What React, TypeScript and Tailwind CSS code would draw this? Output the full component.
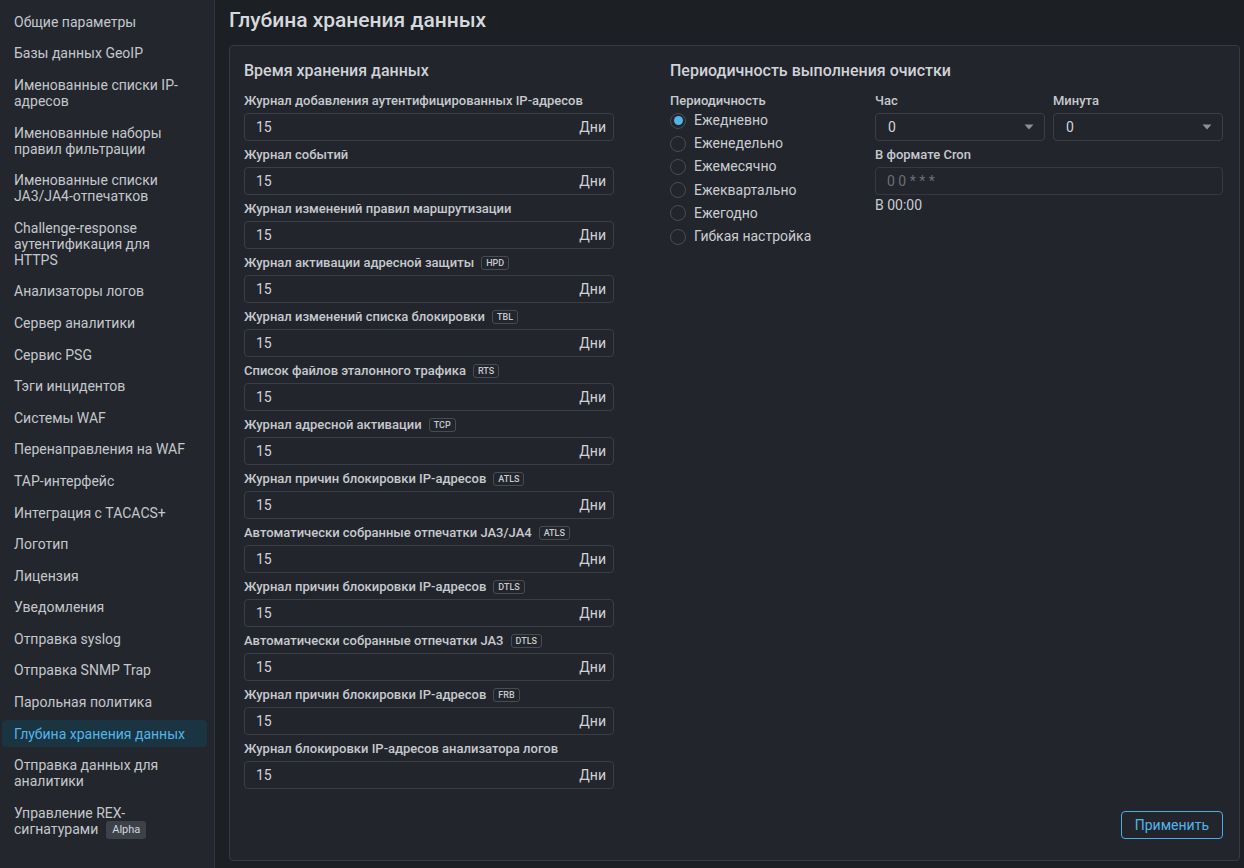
import React from "react";

const navItems: { label: string; active?: boolean; badge?: string; lines?: string[] }[] = [
  { label: "Общие параметры" },
  { label: "Базы данных GeoIP" },
  { label: "Именованные списки IP-адресов" },
  { label: "Именованные наборы правил фильтрации" },
  { label: "Именованные списки JA3/JA4-отпечатков" },
  { label: "Challenge-response аутентификация для HTTPS" },
  { label: "Анализаторы логов" },
  { label: "Сервер аналитики" },
  { label: "Сервис PSG" },
  { label: "Тэги инцидентов" },
  { label: "Системы WAF" },
  { label: "Перенаправления на WAF" },
  { label: "TAP-интерфейс" },
  { label: "Интеграция с TACACS+" },
  { label: "Логотип" },
  { label: "Лицензия" },
  { label: "Уведомления" },
  { label: "Отправка syslog" },
  { label: "Отправка SNMP Trap" },
  { label: "Парольная политика" },
  { label: "Глубина хранения данных", active: true },
  { label: "Отправка данных для аналитики" },
  { label: "Управление REX-сигнатурами", lines: ["Управление REX-", "сигнатурами"], badge: "Alpha" },
];

const retention: { label: string; tag?: string }[] = [
  { label: "Журнал добавления аутентифицированных IP-адресов" },
  { label: "Журнал событий" },
  { label: "Журнал изменений правил маршрутизации" },
  { label: "Журнал активации адресной защиты", tag: "HPD" },
  { label: "Журнал изменений списка блокировки", tag: "TBL" },
  { label: "Список файлов эталонного трафика", tag: "RTS" },
  { label: "Журнал адресной активации", tag: "TCP" },
  { label: "Журнал причин блокировки IP-адресов", tag: "ATLS" },
  { label: "Автоматически собранные отпечатки JA3/JA4", tag: "ATLS" },
  { label: "Журнал причин блокировки IP-адресов", tag: "DTLS" },
  { label: "Автоматически собранные отпечатки JA3", tag: "DTLS" },
  { label: "Журнал причин блокировки IP-адресов", tag: "FRB" },
  { label: "Журнал блокировки IP-адресов анализатора логов" },
];

const periods = [
  "Ежедневно",
  "Еженедельно",
  "Ежемесячно",
  "Ежеквартально",
  "Ежегодно",
  "Гибкая настройка",
];

function Caret() {
  return (
    <svg width="10" height="6" viewBox="0 0 10 6" className="shrink-0">
      <path d="M0.5 0.5 H9.5 L5 5.5 Z" fill="#8b9099" />
    </svg>
  );
}

function Select({ value }: { value: string }) {
  return (
    <div className="flex h-[28px] flex-1 items-center justify-between rounded-[4px] border border-[#3a3e46] pl-3 pr-[10px] text-[14px] text-[#d0d3d8]">
      <span>{value}</span>
      <Caret />
    </div>
  );
}

export default function App() {
  return (
    <div
      className="flex h-[868px] w-full overflow-hidden bg-[#1c1f24] text-[#c9ccd1]"
      style={{ fontFamily: "Roboto, 'Noto Sans', sans-serif" }}
    >
      {/* sidebar navigation */}
      <aside className="w-[215px] shrink-0 border-r border-[#30343b] bg-[#23262d] pt-[6px]">
        <nav className="flex flex-col pr-[7px] pl-[2px]">
          {navItems.map((item, i) => (
            <div
              key={i}
              className={
                item.active
                  ? "my-[2px] rounded-[4px] bg-[#1b3441] px-3 py-[5.8px] text-[14px] leading-[16px] text-[#52b4ea]"
                  : "my-[2px] rounded-[4px] px-3 py-[5.8px] text-[14px] leading-[16px] text-[#c4c7cc]"
              }
            >
              {item.lines ? (
                item.lines.map((line, j) => (
                  <div key={j} className="flex h-[16px] items-center">
                    <span>{line}</span>
                    {item.badge && j === item.lines!.length - 1 && (
                      <span className="relative top-[1px] ml-[8px] inline-block rounded-[3px] bg-[#3c414a] px-[6px] py-[2px] text-[11px] leading-[14px] text-[#d3d6db]">
                        {item.badge}
                      </span>
                    )}
                  </div>
                ))
              ) : (
                item.label
              )}
            </div>
          ))}
        </nav>
      </aside>

      {/* main area */}
      <main className="flex min-w-0 flex-1 flex-col pl-[14px] pr-[4px] pb-[7px]">
        <h1 className="flex h-[45px] items-center pb-[3px] text-[21px] font-medium text-[#d5d8dc]">
          Глубина хранения данных
        </h1>

        <section className="flex flex-1 flex-col rounded-[4px] border border-[#363a42] bg-[#22252c] pl-[14px] pr-[16px] pt-[12px] pb-[21px]">
          <div className="flex">
            {/* retention periods */}
            <div className="w-[370px] shrink-0">
              <h2 className="h-[26px] text-[16px] font-medium leading-[26px] text-[#cfd2d7]">
                Время хранения данных
              </h2>
              <div className="mt-[9px] flex flex-col">
                {retention.map((row, i) => (
                  <div key={i} className="mb-[6px]">
                    <div className="flex h-[16px] items-center gap-[7px] text-[13px] font-medium text-[#c6c9ce]">
                      <span>{row.label}</span>
                      {row.tag && (
                        <span className="rounded-[3px] border border-[#464b54] px-[4px] text-[9px] font-medium leading-[12px] text-[#c6c9ce]">
                          {row.tag}
                        </span>
                      )}
                    </div>
                    <div className="mt-[4px] flex h-[28px] items-center justify-between rounded-[4px] border border-[#3a3e46] pl-[11px] pr-[7px] text-[14px] text-[#d0d3d8]">
                      <span>15</span>
                      <span>Дни</span>
                    </div>
                  </div>
                ))}
              </div>
            </div>

            {/* cleanup schedule */}
            <div className="ml-[56px] flex-1">
              <h2 className="h-[26px] text-[16px] font-medium leading-[26px] text-[#cfd2d7]">
                Периодичность выполнения очистки
              </h2>
              <div className="mt-[9px] flex">
                <div className="w-[205px] shrink-0">
                  <div className="h-[16px] text-[13px] font-medium leading-[16px] text-[#c6c9ce]">
                    Периодичность
                  </div>
                  <div className="flex flex-col">
                    {periods.map((p, i) => (
                      <div key={p} className="flex h-[23.2px] items-center gap-[8px] text-[14px] text-[#c9ccd1]">
                        <span className="flex h-[16px] w-[16px] items-center justify-center rounded-full border border-[#474c55]">
                          {i === 0 && <span className="h-[9px] w-[9px] rounded-full bg-[#52b4ea]" />}
                        </span>
                        <span>{p}</span>
                      </div>
                    ))}
                  </div>
                </div>

                <div className="flex-1">
                  <div className="flex gap-[8px]">
                    <div className="flex flex-1 flex-col">
                      <div className="h-[16px] text-[13px] font-medium leading-[16px] text-[#c6c9ce]">Час</div>
                      <div className="mt-[4px] flex">
                        <Select value="0" />
                      </div>
                    </div>
                    <div className="flex flex-1 flex-col">
                      <div className="h-[16px] text-[13px] font-medium leading-[16px] text-[#c6c9ce]">Минута</div>
                      <div className="mt-[4px] flex">
                        <Select value="0" />
                      </div>
                    </div>
                  </div>
                  <div className="mt-[6px] h-[16px] text-[13px] font-medium leading-[16px] text-[#c6c9ce]">
                    В формате Cron
                  </div>
                  <div className="mt-[4px] flex h-[28px] items-center rounded-[4px] border border-[#353941] pl-[11px] text-[14px] text-[#6a6f77]">
                    0 0 * * *
                  </div>
                  <div className="mt-[1px] h-[18px] text-[14px] leading-[18px] text-[#c9ccd1]">В 00:00</div>
                </div>
              </div>
            </div>
          </div>

          <div className="mt-auto flex justify-end">
            <button className="h-[28px] rounded-[4px] border border-[#4aaee4] px-[13px] text-[14px] text-[#52b4ea]">
              Применить
            </button>
          </div>
        </section>
      </main>
    </div>
  );
}
